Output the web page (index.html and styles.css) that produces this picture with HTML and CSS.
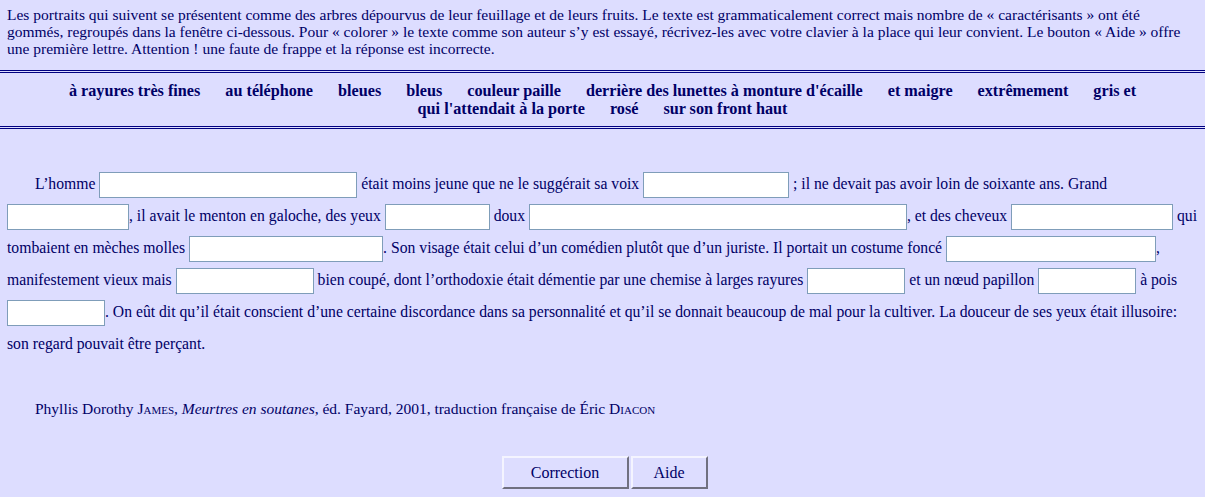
FILE: index.html
```html
<!DOCTYPE html>
<html lang="fr">
<head>
<meta charset="utf-8">
<title>Caractérisants</title>
<link rel="stylesheet" href="styles.css">
</head>
<body>
<p class="intro">Les portraits qui suivent se présentent comme des arbres dépourvus de leur feuillage et de leurs fruits. Le texte est grammaticalement correct mais nombre de « caractérisants » ont été<br>gommés, regroupés dans la fenêtre ci-dessous. Pour « colorer » le texte comme son auteur s’y est essayé, récrivez-les avec votre clavier à la place qui leur convient. Le bouton « Aide » offre<br>une première lettre. Attention ! une faute de frappe et la réponse est incorrecte.</p>
<div class="bank">
<span>à rayures très fines</span>
<span>au téléphone</span>
<span>bleues</span>
<span>bleus</span>
<span>couleur paille</span>
<span>derrière des lunettes à monture d'écaille</span>
<span>et maigre</span>
<span>extrêmement</span>
<span>gris et</span>
<span>qui l'attendait à la porte</span>
<span>rosé</span>
<span>sur son front haut</span>
</div>
<p class="texte">L’homme <input class="gap w257" type="text"> était moins jeune que ne le suggérait sa voix <input class="gap w145" type="text"> ; il ne devait pas avoir loin de soixante ans. Grand <input class="gap w121" type="text">, il avait le menton en galoche, des yeux <input class="gap w104" type="text"> doux <input class="gap w377" type="text">, et des cheveux <input class="gap w161" type="text"> qui tombaient en mèches molles <input class="gap w193" type="text">. Son visage était celui d’un comédien plutôt que d’un juriste. Il portait un costume foncé <input class="gap w209" type="text">, manifestement vieux mais <input class="gap w137" type="text"> bien coupé, dont l’orthodoxie était démentie par une chemise à larges rayures <input class="gap w97" type="text"> et un nœud papillon <input class="gap w97" type="text"> à pois <input class="gap w97" type="text">. On eût dit qu’il était conscient d’une certaine discordance dans sa personnalité et qu’il se donnait beaucoup de mal pour la cultiver. La douceur de ses yeux était illusoire: son regard pouvait être perçant.</p>
<p class="source">Phyllis Dorothy <span class="sc">James</span>, <em>Meurtres en soutanes</em>, éd. Fayard, 2001, traduction française de Éric <span class="sc">Diacon</span></p>
<div class="actions">
<button class="btn btn-corr" type="button">Correction</button>
<button class="btn btn-aide" type="button">Aide</button>
</div>
</body>
</html>
```
FILE: styles.css
```css
html, body {
  margin: 0;
  padding: 0;
  background: #ddddff;
}
body {
  font-family: "Liberation Serif", "Times New Roman", "DejaVu Serif", serif;
  color: #000066;
  font-size: 15px;
}
.intro {
  margin: 0;
  padding: 6px 0 0 7px;
  line-height: 17px;
  font-size: 15.5px;
  white-space: nowrap;
}
.bank {
  margin-top: 13px;
  border-top: 3px double #000080;
  border-bottom: 3px double #000080;
  padding: 9px 20px 8px;
  display: flex;
  flex-wrap: wrap;
  justify-content: center;
  column-gap: 25px;
  font-weight: bold;
  line-height: 18px;
  font-size: 16.2px;
}
.texte {
  margin: 39px 0 0;
  padding: 0 8px 0 7px;
  line-height: 32px;
  text-indent: 28px;
  font-size: 15.7px;
}
.gap {
  box-sizing: border-box;
  height: 26px;
  border: 1px solid #7f9db9;
  background: #ffffff;
  margin: 0;
  padding: 0 2px;
  vertical-align: middle;
  font: inherit;
  text-indent: 0;
}
.w257 { width: 258px; }
.w145 { width: 146px; }
.w121 { width: 122px; }
.w104 { width: 105px; }
.w377 { width: 378px; }
.w161 { width: 162px; }
.w193 { width: 194px; }
.w209 { width: 210px; }
.w137 { width: 138px; }
.w97 { width: 98px; }
.source {
  margin: 40px 0 0;
  padding: 0 8px 0 35px;
  line-height: 18px;
  font-size: 15.5px;
}
.sc {
  font-variant: small-caps;
}
.actions {
  margin-top: 38px;
  display: flex;
  justify-content: center;
  gap: 2px;
  padding-left: 4px;
}
.btn {
  height: 33px;
  background: #ddddff;
  color: #000066;
  font-family: "Liberation Serif", "Times New Roman", serif;
  font-size: 16px;
  border-style: solid;
  border-width: 2px;
  border-color: #f4f4ff #707080 #707080 #f4f4ff;
  padding: 0;
}
.btn-corr { width: 127px; }
.btn-aide { width: 77px; }
```
